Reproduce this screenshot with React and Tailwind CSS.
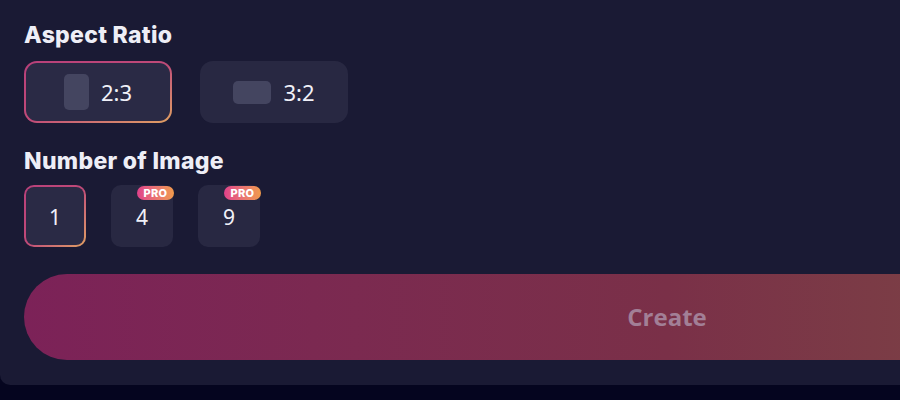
import React from "react";

const numFont = { fontFamily: "'Noto Sans', sans-serif" };

function ProBadge() {
  return (
    <span className="absolute top-[1px] -right-[1px] h-[14px] w-[37px] rounded-full bg-gradient-to-r from-[#e0408a] to-[#f09a4a] text-[11px] leading-[14px] font-extrabold text-white text-center tracking-[0.3px]">
      PRO
    </span>
  );
}

export default function App() {
  return (
    <div className="w-[900px] h-[400px] bg-[#05051f] overflow-hidden" style={{ fontFamily: "Inter, 'Noto Sans', sans-serif" }}>
      <div className="w-[1400px] h-[385px] bg-[#1a1a34] rounded-bl-[10px] pl-[24px] pt-[21px]">
        <div className="text-[23px] font-extrabold text-[#eeeef6] leading-[28px] tracking-[0.3px]">Aspect Ratio</div>
        <div className="flex gap-[28px] mt-[12px]">
          <div className="w-[148px] h-[62px] rounded-[13px] p-[2px] bg-gradient-to-br from-[#b8407a] via-[#c04a78] to-[#e0a060]">
            <div className="w-full h-full rounded-[11px] bg-[#2a2a45] flex items-center justify-center gap-[12px]">
              <div className="w-[25px] h-[36px] rounded-[5px] bg-[#444560]" />
              <span className="text-[22px] text-[#f0f0f8]" style={numFont}>2:3</span>
            </div>
          </div>
          <div className="w-[148px] h-[62px] rounded-[13px] bg-[#282842] flex items-center justify-center gap-[12px]">
            <div className="w-[38px] h-[23px] rounded-[5px] bg-[#444560]" />
            <span className="text-[22px] text-[#f0f0f8]" style={numFont}>3:2</span>
          </div>
        </div>
        <div className="text-[23px] font-extrabold text-[#eeeef6] leading-[28px] tracking-[0.3px] mt-[24px]">Number of Image</div>
        <div className="flex gap-[25px] mt-[10px]">
          <div className="w-[62px] h-[62px] rounded-[10px] p-[2px] bg-gradient-to-br from-[#b8407a] via-[#c04a78] to-[#e0a060]">
            <div className="w-full h-full rounded-[8px] bg-[#2a2a45] flex items-center justify-center pt-[4px]">
              <span className="text-[21px] text-[#f0f0f8]" style={numFont}>1</span>
            </div>
          </div>
          <div className="relative w-[62px] h-[62px] rounded-[10px] bg-[#282842] flex items-center justify-center pt-[4px]">
            <span className="text-[21px] text-[#f0f0f8]" style={numFont}>4</span>
            <ProBadge />
          </div>
          <div className="relative w-[62px] h-[62px] rounded-[10px] bg-[#282842] flex items-center justify-center pt-[4px]">
            <span className="text-[21px] text-[#f0f0f8]" style={numFont}>9</span>
            <ProBadge />
          </div>
        </div>
        <div className="mt-[27px] w-[1286px] h-[86px] rounded-full bg-gradient-to-r from-[#7c2258] via-[#7a3048] to-[#7c5040] flex items-center justify-center">
          <span className="text-[24px] font-bold text-[#a27f96]" style={{ fontFamily: "'Open Sans', sans-serif" }}>Create</span>
        </div>
      </div>
    </div>
  );
}
